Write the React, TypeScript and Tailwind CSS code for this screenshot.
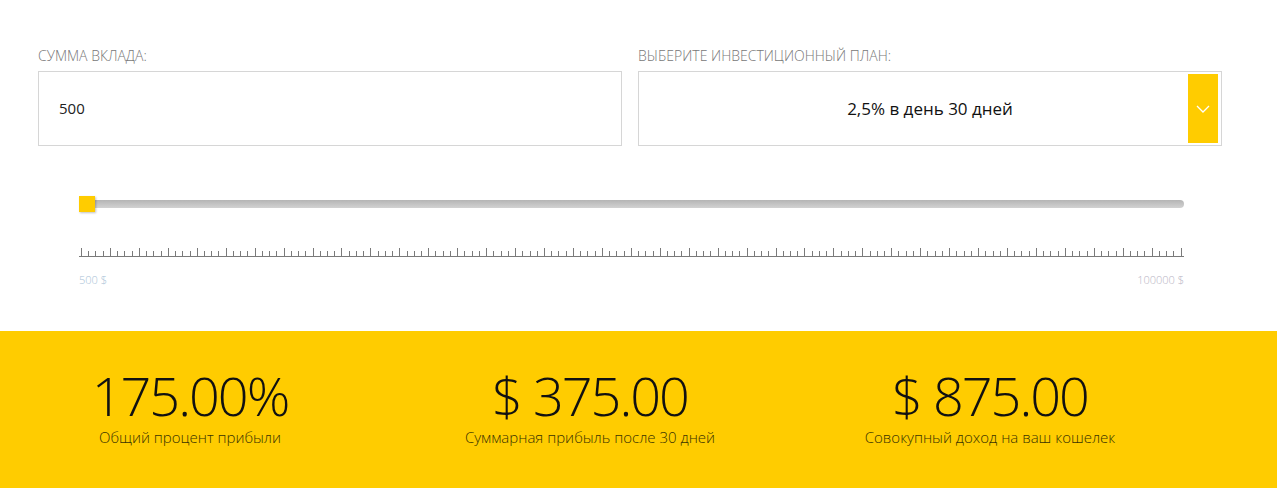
import React from "react";

const ticks = Array.from({ length: 153 }, (_, i) => i);

const stats = [
  { value: "175.00%", label: "Общий процент прибыли" },
  { value: "$ 375.00", label: "Суммарная прибыль после 30 дней" },
  { value: "$ 875.00", label: "Совокупный доход на ваш кошелек" },
];

export default function App() {
  return (
    <div className="w-[1277px] h-[488px] bg-white overflow-hidden font-['Open_Sans',sans-serif] flex flex-col">
      {/* form */}
      <div className="ml-[38px] w-[1184px] pt-[47px] flex gap-[16px]">
        <div className="flex-1 flex flex-col">
          <label className="text-[14px] leading-[17px] font-light text-[#777] uppercase mb-[7px]">
            Сумма вклада:
          </label>
          <div className="h-[75px] border border-[#d6d6d6] flex items-center px-[20px]">
            <span className="text-[15px] text-[#222]">500</span>
          </div>
        </div>
        <div className="flex-1 flex flex-col">
          <label className="text-[14px] leading-[17px] font-light text-[#777] uppercase mb-[7px]">
            Выберите инвестиционный план:
          </label>
          <div className="relative h-[75px] border border-[#d6d6d6] flex items-center justify-center">
            <span className="text-[17px] text-[#111]">2,5% в день 30 дней</span>
            <div className="absolute top-[2px] bottom-[2px] right-[3px] w-[30px] bg-[#ffcc00] flex items-center justify-center">
              <svg width="14" height="8" viewBox="0 0 14 8" fill="none">
                <path d="M1 1l6 6 6-6" stroke="white" strokeWidth="1.3" />
              </svg>
            </div>
          </div>
        </div>
      </div>

      {/* slider */}
      <div className="ml-[79px] w-[1105px] mt-[50px]">
        <div className="relative h-[16px] flex items-center">
          <div className="w-full h-[8px] rounded-r-[4px] bg-gradient-to-b from-[#b5b5b5] to-[#d2d2d2]" />
          <div className="absolute left-0 top-0 w-[16px] h-[16px] bg-[#ffcc00] shadow-[1px_1px_2px_rgba(0,0,0,0.25)]" />
        </div>
        <div className="mt-[36px] px-[2px] flex items-end justify-between h-[8px]">
          {ticks.map((i) => (
            <div
              key={i}
              className={i % 4 === 0 ? "w-px h-[8px] bg-[#7a7a7a]" : "w-px h-[5px] bg-[#7a7a7a]"}
            />
          ))}
        </div>
        <div className="h-px bg-[#7a7a7a]" />
        <div className="mt-[16px] flex justify-between text-[11px] leading-[13px] text-[#a9bfd6] font-light">
          <span>500 $</span>
          <span className="text-[#b8b4c4]">100000 $</span>
        </div>
      </div>

      {/* results */}
      <div className="mt-auto h-[157px] bg-[#ffcc00] flex gap-[20px] pt-[32px]">
        {stats.map((s) => (
          <div key={s.label} className="w-[380px] flex flex-col items-center">
            <div className="text-[54px] leading-[64px] font-light text-[#111] tracking-[-2px]">
              {s.value}
            </div>
            <div className="text-[15px] leading-[18px] font-light text-[#3a3300] mt-[1px]">
              {s.label}
            </div>
          </div>
        ))}
      </div>
    </div>
  );
}
